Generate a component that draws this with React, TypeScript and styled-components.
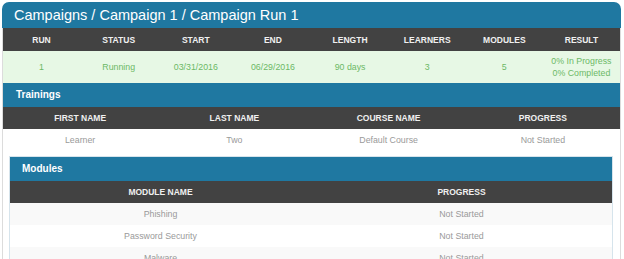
import styled, { createGlobalStyle } from "styled-components";

const GlobalStyle = createGlobalStyle`
  body {
    margin: 0;
    background: #ffffff;
    font-family: "Liberation Sans", Arial, sans-serif;
  }
`;

const runCols = ["Run", "Status", "Start", "End", "Length", "Learners", "Modules", "Result"];
const trainingCols = ["First Name", "Last Name", "Course Name", "Progress"];
const moduleRows = [
  { name: "Phishing", progress: "Not Started" },
  { name: "Password Security", progress: "Not Started" },
  { name: "Malware", progress: "Not Started" },
];

export default function App() {
  return (
    <>
      <GlobalStyle />
      <Panel>
        <TitleBar>Campaigns / Campaign 1 / Campaign Run 1</TitleBar>
        <Body>
          <Table>
            <thead>
              <tr>
                {runCols.map((c) => (
                  <Th key={c}>{c}</Th>
                ))}
              </tr>
            </thead>
            <tbody>
              <RunRow>
                <Td>1</Td>
                <Td>Running</Td>
                <Td>03/31/2016</Td>
                <Td>06/29/2016</Td>
                <Td>90 days</Td>
                <Td>3</Td>
                <Td>5</Td>
                <Td>
                  0% In Progress
                  <br />
                  0% Completed
                </Td>
              </RunRow>
            </tbody>
          </Table>

          <SectionBar>Trainings</SectionBar>
          <Table>
            <thead>
              <tr>
                {trainingCols.map((c) => (
                  <Th key={c} $short>
                    {c}
                  </Th>
                ))}
              </tr>
            </thead>
            <tbody>
              <Row>
                <Td>Learner</Td>
                <Td>Two</Td>
                <Td>Default Course</Td>
                <Td>Not Started</Td>
              </Row>
            </tbody>
          </Table>

          <SubPanel>
            <SectionBar $inset>Modules</SectionBar>
            <Table>
              <thead>
                <tr>
                  <Th $short>Module Name</Th>
                  <Th $short>Progress</Th>
                </tr>
              </thead>
              <tbody>
                {moduleRows.map((m, i) => (
                  <Row key={m.name} $striped={i % 2 === 0}>
                    <Td>{m.name}</Td>
                    <Td>{m.progress}</Td>
                  </Row>
                ))}
              </tbody>
            </Table>
          </SubPanel>
        </Body>
      </Panel>
    </>
  );
}

const Panel = styled.div`
  margin: 2px 0 0 2px;
  width: 619px;
  border-radius: 7px 7px 0 0;
  overflow: hidden;
`;

const TitleBar = styled.div`
  height: 26px;
  line-height: 27px;
  padding-left: 12px;
  background: #1f78a1;
  color: #ffffff;
  font-size: 14.5px;
`;

const Body = styled.div`
  border-left: 1px solid #dcdcdc;
  border-right: 1px solid #dcdcdc;
  padding-bottom: 20px;
`;

const Table = styled.table`
  width: 100%;
  border-collapse: collapse;
  table-layout: fixed;
`;

const Th = styled.th<{ $short?: boolean }>`
  height: ${(p) => (p.$short ? "22px" : "23px")};
  padding: 0 4px;
  background: #424242;
  color: #f0f0f0;
  font-size: 8.5px;
  font-weight: 700;
  text-transform: uppercase;
  text-align: center;
  vertical-align: middle;
`;

const Td = styled.td`
  padding: 0 4px;
  font-size: 8.8px;
  line-height: 12px;
  text-align: center;
  vertical-align: middle;
`;

const RunRow = styled.tr`
  height: 32px;
  background: #e7f8e5;
  color: #6cb866;
`;

const Row = styled.tr<{ $striped?: boolean }>`
  height: 22px;
  background: ${(p) => (p.$striped ? "#f9f9f9" : "#ffffff")};
  color: #9a9a9a;
`;

const SectionBar = styled.div<{ $inset?: boolean }>`
  height: 24px;
  line-height: 24px;
  padding-left: ${(p) => (p.$inset ? "12px" : "13px")};
  background: #1f78a1;
  color: #ffffff;
  font-size: 10px;
  font-weight: 700;
`;

const SubPanel = styled.div`
  margin: 5px 7px 0 6px;
  border: 1px solid #d6e4ec;
  border-bottom: none;
`;
